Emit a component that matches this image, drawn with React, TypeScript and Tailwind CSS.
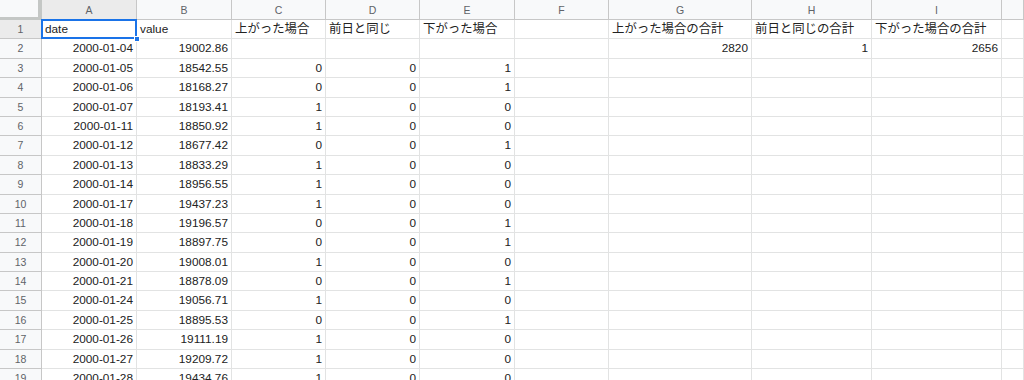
const cols = ["A", "B", "C", "D", "E", "F", "G", "H", "I", ""]
const widths = "42px 95px 95px 94px 94px 95px 94px 143px 120px 130px 1fr"

type Row = [string, string, string, string, string]

const data: Row[] = [
  ["2000-01-04", "19002.86", "", "", ""],
  ["2000-01-05", "18542.55", "0", "0", "1"],
  ["2000-01-06", "18168.27", "0", "0", "1"],
  ["2000-01-07", "18193.41", "1", "0", "0"],
  ["2000-01-11", "18850.92", "1", "0", "0"],
  ["2000-01-12", "18677.42", "0", "0", "1"],
  ["2000-01-13", "18833.29", "1", "0", "0"],
  ["2000-01-14", "18956.55", "1", "0", "0"],
  ["2000-01-17", "19437.23", "1", "0", "0"],
  ["2000-01-18", "19196.57", "0", "0", "1"],
  ["2000-01-19", "18897.75", "0", "0", "1"],
  ["2000-01-20", "19008.01", "1", "0", "0"],
  ["2000-01-21", "18878.09", "0", "0", "1"],
  ["2000-01-24", "19056.71", "1", "0", "0"],
  ["2000-01-25", "18895.53", "0", "0", "1"],
  ["2000-01-26", "19111.19", "1", "0", "0"],
  ["2000-01-27", "19209.72", "1", "0", "0"],
  ["2000-01-28", "19434.76", "1", "0", "0"],
]

const font = { fontFamily: '"Liberation Sans", Arial, "Noto Sans CJK JP", sans-serif' }

function Cell({ children, right, jp }: { children?: React.ReactNode; right?: boolean; jp?: boolean }) {
  return (
    <div
      className={`h-[19.4px] border-r border-b border-[#e2e3e3] bg-white px-[3px] leading-[19px] text-[#222] whitespace-nowrap overflow-hidden ${jp ? "text-[12.4px]" : "text-[11.8px]"} ${right ? "text-right" : "text-left"}`}
    >
      {children}
    </div>
  )
}

function RowHead({ n, active }: { n: number; active?: boolean }) {
  return (
    <div
      className={`h-[19.4px] border-r border-b border-[#c7c7c7] text-center text-[10.5px] leading-[19px] text-[#5f6368] ${active ? "bg-[#ebebeb]" : "bg-[#f8f9fa]"}`}
    >
      {n}
    </div>
  )
}

export default function App() {
  return (
    <div className="h-[380px] w-[1024px] overflow-hidden bg-white" style={font}>
      <div className="grid" style={{ gridTemplateColumns: widths }}>
        {/* column headers */}
        <div className="h-[20px] border-r-4 border-b-[3px] border-[#c4c7c5] bg-[#f8f9fa]" />
        {cols.map((c, i) => (
          <div
            key={i}
            className={`h-[20px] border-r border-b border-[#c7c7c7] text-center text-[10.5px] leading-[20px] text-[#5f6368] ${i === 0 ? "bg-[#ebebeb]" : "bg-[#f8f9fa]"}`}
          >
            {c}
          </div>
        ))}

        {/* row 1 */}
        <RowHead n={1} active />
        <div className="relative h-[19.4px] border-r border-b border-[#e2e3e3] bg-white">
          <div className="absolute -top-px -left-px right-[-1px] bottom-[-1px] border-2 border-[#1a73e8] px-[2px] text-[11.8px] leading-[16px] text-[#222]">
            date
          </div>
          <div className="absolute right-[-4px] bottom-[-4px] h-[6px] w-[6px] border border-white bg-[#1a73e8]" />
        </div>
        <Cell>value</Cell>
        <Cell jp>上がった場合</Cell>
        <Cell jp>前日と同じ</Cell>
        <Cell jp>下がった場合</Cell>
        <Cell />
        <Cell jp>上がった場合の合計</Cell>
        <Cell jp>前日と同じの合計</Cell>
        <Cell jp>下がった場合の合計</Cell>
        <Cell />

        {data.map((r, i) => (
          <RowFragment key={i} n={i + 2} row={r} />
        ))}
      </div>
    </div>
  )
}

function RowFragment({ n, row }: { n: number; row: Row }) {
  const totals = n === 2 ? ["2820", "1", "2656"] : ["", "", ""]
  return (
    <>
      <RowHead n={n} />
      {row.map((v, j) => (
        <Cell key={j} right>
          {v}
        </Cell>
      ))}
      <Cell />
      {totals.map((v, j) => (
        <Cell key={"t" + j} right>
          {v}
        </Cell>
      ))}
      <Cell />
    </>
  )
}
